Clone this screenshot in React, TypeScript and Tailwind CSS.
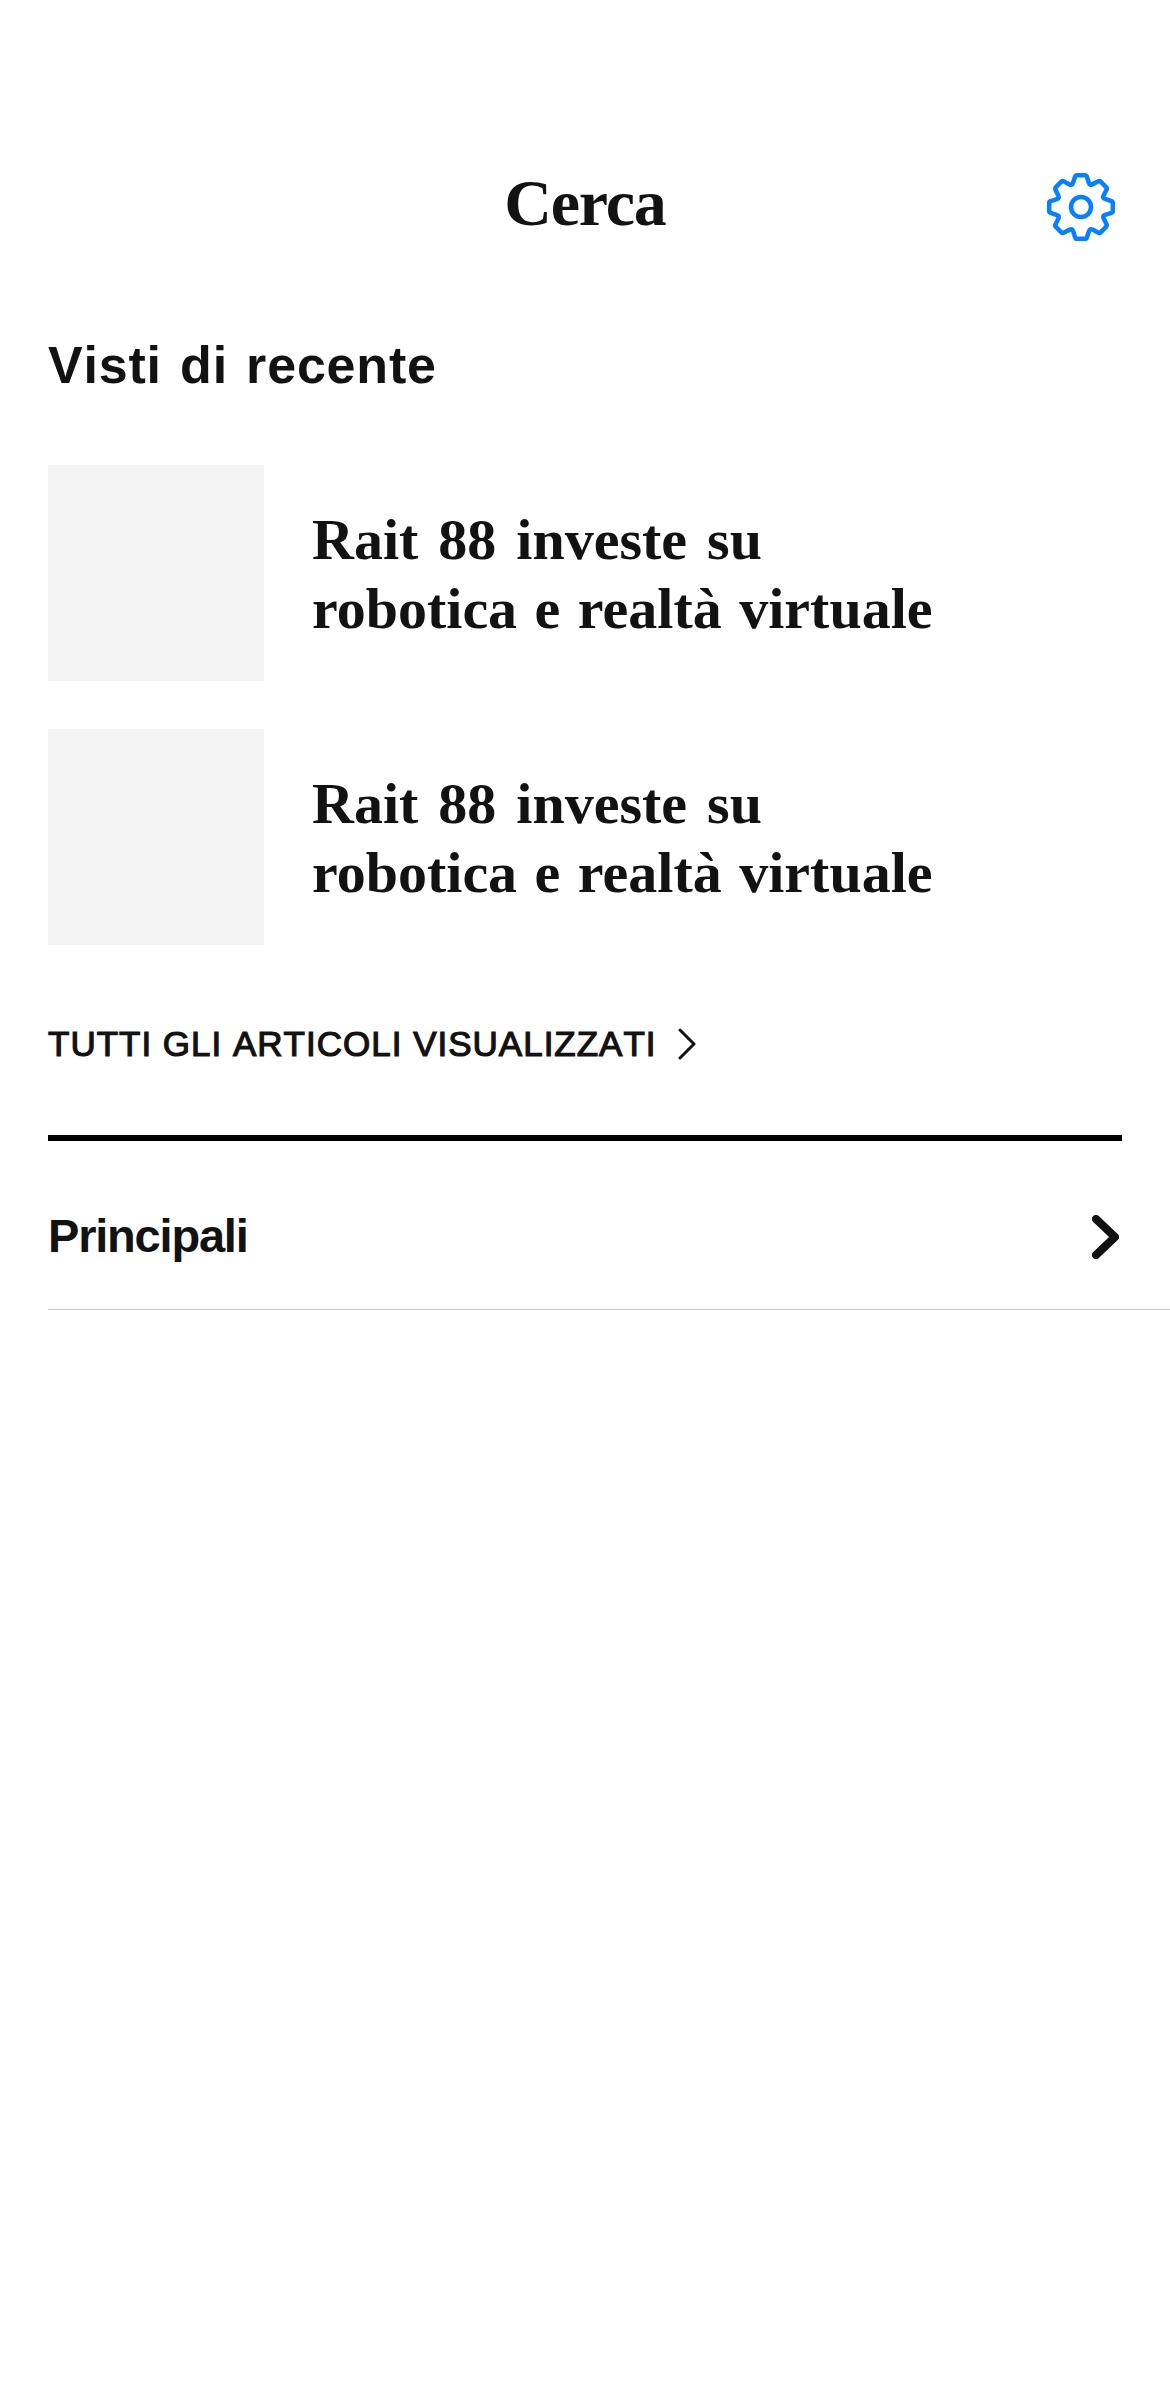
const articles = [
  ['Rait 88 investe su', 'robotica e realtà virtuale'],
  ['Rait 88 investe su', 'robotica e realtà virtuale'],
];

type Point = [number, number];

/** Outline of an eight-toothed gear centred on the origin, with softened corners. */
function gearPath(): string {
  const points: Point[] = [];
  const base: Point[] = [[-5.4, -31.8], [5.4, -31.8], [8.7, -21.4]];
  for (let i = 0; i < 8; i++) {
    const a = (i * Math.PI) / 4;
    for (const [x, y] of base) {
      points.push([x * Math.cos(a) - y * Math.sin(a), x * Math.sin(a) + y * Math.cos(a)]);
    }
  }
  const toward = (from: Point, to: Point, d: number) => {
    const len = Math.hypot(to[0] - from[0], to[1] - from[1]);
    return `${(from[0] + ((to[0] - from[0]) * d) / len).toFixed(2)} ${(from[1] + ((to[1] - from[1]) * d) / len).toFixed(2)}`;
  };
  const n = points.length;
  return (
    points
      .map((p, i) => {
        const prev = points[(i + n - 1) % n];
        const next = points[(i + 1) % n];
        const d = i % 3 === 2 ? 2.8 : 1.4;
        return `${i ? 'L' : 'M'}${toward(p, prev, d)}Q${p[0].toFixed(2)} ${p[1].toFixed(2)} ${toward(p, next, d)}`;
      })
      .join('') + 'Z'
  );
}

function Gear() {
  return (
    <svg className="h-[72px] w-[72px]" viewBox="-36 -36 72 72" fill="none" stroke="#087fff" strokeWidth="4.5" strokeLinejoin="round">
      <path d={gearPath()} />
      <circle r="10" />
    </svg>
  );
}

export default function App() {
  return (
    <main className="min-h-[2391px] w-[1170px] bg-white pt-[160px] font-['Liberation_Sans',Arial,sans-serif] text-[#121212]">
      <header className="grid h-[90px] grid-cols-[1fr_auto_1fr] items-center pr-[51px] pl-[51px]">
        <span />
        <h1 className="-mt-1 font-['Liberation_Serif',serif] text-[66px] leading-[90px] font-bold tracking-[-1.2px]">Cerca</h1>
        <button aria-label="Impostazioni" className="mt-1 mr-0.5 justify-self-end">
          <Gear />
        </button>
      </header>

      <section className="px-12">
        <h2 className="mt-[85px] text-[52px] leading-[60px] font-bold tracking-[0.8px] [font-kerning:none] [word-spacing:3px]">Visti di recente</h2>
        <ul className="mt-[70px] flex flex-col gap-12">
          {articles.map(([first, second], i) => (
            <li key={i} className="flex items-center gap-12">
              <div className="h-[216px] w-[216px] shrink-0 bg-[#f4f4f4]" />
              <p className="mt-0.5 font-['Liberation_Serif',serif] text-[58px] leading-[69px] font-bold">
                <span className="block [word-spacing:5.5px]">{first}</span>
                <span className="block [word-spacing:3px]">{second}</span>
              </p>
            </li>
          ))}
        </ul>
        <a className="mt-[79px] flex h-10 items-center">
          <span className="text-[35px] leading-10 tracking-[1px] [font-kerning:none] [-webkit-text-stroke:1.2px_#121212]">TUTTI GLI ARTICOLI VISUALIZZATI</span>
          <svg className="ml-[21px] h-8 w-[18px]" viewBox="0 0 18 32" fill="none" stroke="#121212" strokeWidth="3" strokeLinecap="round" strokeLinejoin="round">
            <path d="M2 2L16 16L2 30" />
          </svg>
        </a>
        <div className="mt-[71px] h-1.5 bg-black" />
      </section>

      <div className="ml-12 flex h-[169px] items-center justify-between border-b border-[#cccccc] pr-[51px]">
        <span className="mt-[22px] text-[47px] leading-[54px] font-bold tracking-[-1.2px]">Principali</span>
        <svg className="mt-6 h-11 w-[27px]" viewBox="0 0 27 44" fill="none" stroke="#121212" strokeWidth="8" strokeLinecap="round" strokeLinejoin="round">
          <path d="M4 4L23 22L4 40" />
        </svg>
      </div>
    </main>
  );
}
